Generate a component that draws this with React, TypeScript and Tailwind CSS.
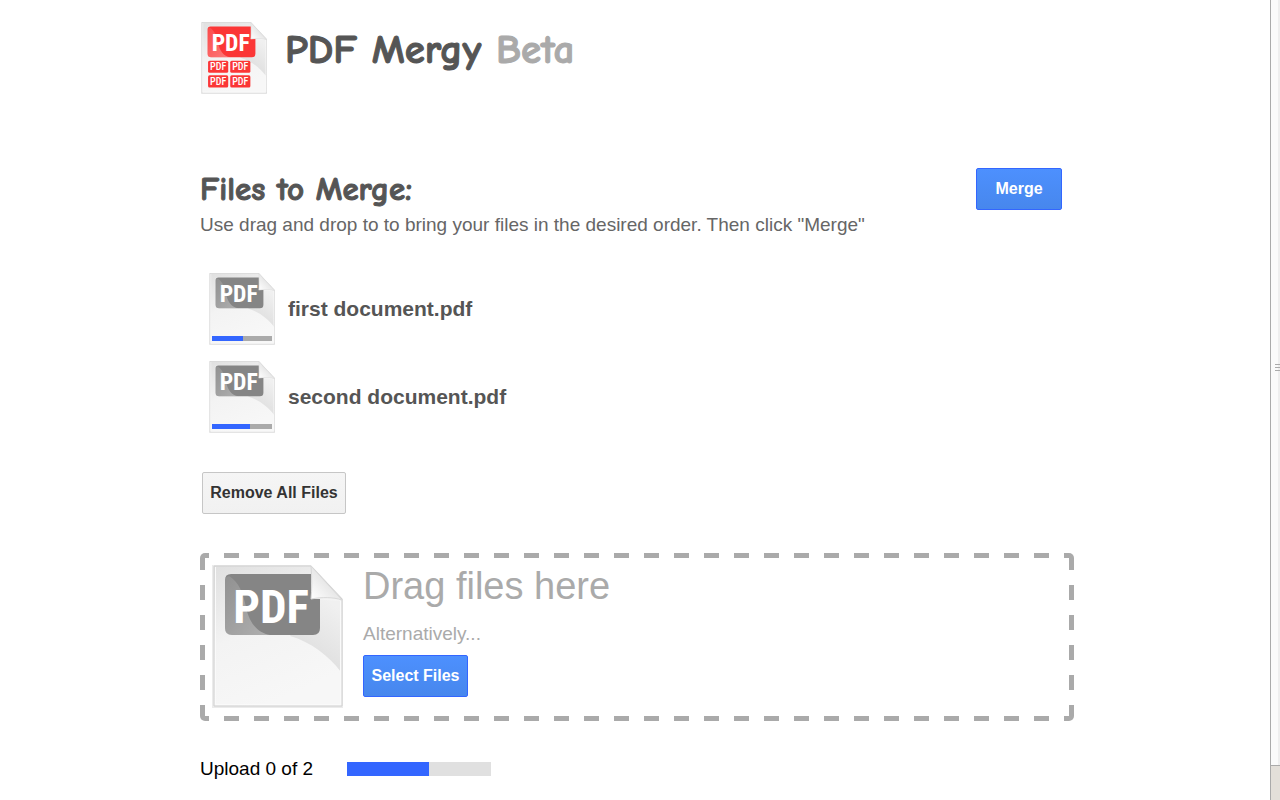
import { useId } from "react";

const files = [
  { name: "first document.pdf", progress: 52 },
  { name: "second document.pdf", progress: 64 },
];

const small = [
  { x: 14, y: 77 },
  { x: 58, y: 77 },
  { x: 14, y: 106 },
  { x: 58, y: 106 },
];

function PdfIcon({ red = false, className }: { red?: boolean; className: string }) {
  const id = useId();
  const tone = red ? "#fb3636" : "#858585";
  return (
    <svg viewBox="0 0 131 143" className={className} aria-hidden="true">
      <defs>
        <linearGradient id={`${id}p`} x1="0" y1="0" x2="0.4" y2="1">
          <stop offset="0" stopColor="#e0e0e0" />
          <stop offset="0.5" stopColor="#f3f3f3" />
          <stop offset="1" stopColor="#f7f7f7" />
        </linearGradient>
        <linearGradient id={`${id}s`} x1="0.2" y1="1" x2="0.7" y2="0">
          <stop offset="0" stopColor="#dadada" />
          <stop offset="1" stopColor="#f0f0f0" />
        </linearGradient>
        <linearGradient id={`${id}f`} x1="0" y1="1" x2="0.7" y2="0.3">
          <stop offset="0" stopColor="#ffffff" />
          <stop offset="1" stopColor="#dedede" />
        </linearGradient>
        <linearGradient id={`${id}b`} x1="0" y1="0" x2="1" y2="1">
          <stop offset="0" stopColor="#ffffff" stopOpacity="0.1" />
          <stop offset="1" stopColor="#ffffff" stopOpacity="0.35" />
        </linearGradient>
      </defs>
      <path d="M0 0H99L131 34V143H0Z" fill="#ebebeb" />
      <path d="M2 1H99L130 34V141H2Z" fill={`url(#${id}p)`} stroke="#d0d0d0" strokeWidth="1" />
      <path d="M78 71C99 77 117 91 129 107V36L99 34Z" fill={`url(#${id}s)`} />
      <path d="M3.5 2V139.5H128.5V36" fill="none" stroke="#fafafa" strokeWidth="1" />
      <path d="M19 9H99V34H108V63Q108 70 101 70H20Q13 70 13 63V15Q13 9 19 9Z" fill={tone} />
      <path d="M17 11C27 17 31 28 34 42C37 57 45 68 58 70H20Q13 70 13 63V15Q13 12 17 11Z" fill={`url(#${id}b)`} />
      <path d="M99 1C100 13 100 24 99 34C110 32 121 32 130 35Z" fill={`url(#${id}f)`} stroke="#d8d8d8" strokeWidth="1" />
      <text x="59" y="58" textAnchor="middle" fontFamily="'Roboto Condensed', 'Open Sans Condensed', Roboto, sans-serif" fontWeight="700" fontSize="47" fill="#fff">
        PDF
      </text>
      {red &&
        small.map((b) => (
          <g key={`${b.x}-${b.y}`}>
            <rect x={b.x} y={b.y} width="40" height="24" rx="3" fill={tone} />
            <text x={b.x + 20} y={b.y + 19} textAnchor="middle" fontFamily="'Roboto Condensed', 'Open Sans Condensed', Roboto, sans-serif" fontWeight="500" fontSize="20" fill="#fff">
              PDF
            </text>
          </g>
        ))}
    </svg>
  );
}

const blueButton =
  "h-[42px] shrink-0 rounded-[2px] border border-[#36f] bg-linear-to-b from-[#4d90fe] to-[#4787ed] text-base font-bold text-white";

const heading =
  "font-['Comic_Neue','Comic_Relief','Comic_Sans_MS',cursive] font-bold [-webkit-text-stroke:1px_currentColor]";

export default function App() {
  return (
    <div className="flex min-h-screen bg-white font-['Liberation_Sans',Arial,sans-serif] text-[#555]">
      <main className="min-w-0 flex-1">
        <div className="mx-auto max-w-[878px] pl-1">
          <header className="flex items-start gap-[18px] pt-[22px]">
            <PdfIcon red className="ml-px h-[72px] w-[66px]" />
            <h1 className={`${heading} text-[41px] leading-[56px]`}>
              PDF Mergy <span className="text-[#aaa]">Beta</span>
            </h1>
          </header>

          <section className="mt-[74px]">
            <div className="flex items-start justify-between pr-3">
              <h2 className={`${heading} text-[33px] leading-[42px]`}>Files to Merge:</h2>
              <button type="button" className={`${blueButton} w-[86px]`}>Merge</button>
            </div>
            <p className="text-[19px] leading-[30px] text-[#666]">
              Use drag and drop to to bring your files in the desired order. Then click "Merge"
            </p>
            <ul className="mt-[33px] flex flex-col gap-4 pl-[9px]">
              {files.map((f) => (
                <li key={f.name} className="flex items-center gap-[13px]">
                  <div className="relative">
                    <PdfIcon className="block h-[72px] w-[66px]" />
                    <div className="absolute bottom-1 left-[3px] h-[5px] w-[60px] bg-[#aaa]">
                      <div className="h-full bg-[#36f]" style={{ width: `${f.progress}%` }} />
                    </div>
                  </div>
                  <span className="text-[21px] leading-7 font-bold">{f.name}</span>
                </li>
              ))}
            </ul>
            <button
              type="button"
              className="mt-[39px] ml-[2px] block h-[42px] w-[144px] rounded-[2px] border border-[#c6c6c6] bg-linear-to-b from-[#f5f5f5] to-[#f1f1f1] text-base font-bold text-[#333]"
            >
              Remove All Files
            </button>
          </section>

          <section className="mt-[39px] flex h-[168px] items-start gap-5 rounded-[5px] bg-[repeating-linear-gradient(90deg,#aaa_0_9px,transparent_9px_24px,#aaa_24px_30px),repeating-linear-gradient(90deg,#aaa_0_9px,transparent_9px_24px,#aaa_24px_30px),repeating-linear-gradient(180deg,transparent_0_2px,#aaa_2px_17px,transparent_17px_30px),repeating-linear-gradient(180deg,transparent_0_2px,#aaa_2px_17px,transparent_17px_30px)] bg-[position:left_top,left_bottom,left_top,right_top] bg-[size:100%_5px,100%_5px,5px_100%,5px_100%] bg-no-repeat p-3">
            <PdfIcon className="h-[143px] w-[131px] shrink-0" />
            <div className="flex flex-col items-start text-[#aaa]">
              <p className="text-[38px] leading-[42px]">Drag files here</p>
              <p className="mt-[14px] text-[19px] leading-[26px]">Alternatively...</p>
              <button type="button" className={`${blueButton} mt-2 w-[105px]`}>Select Files</button>
            </div>
          </section>

          <div className="mt-9 flex items-center gap-[34px] text-[19px] leading-6 text-black">
            <span>Upload 0 of 2</span>
            <div className="h-[14px] w-[144px] bg-[#e0e0e0]">
              <div className="h-full w-[57%] bg-[#36f]" />
            </div>
          </div>
        </div>
      </main>

      <aside className="flex w-[10px] shrink-0 flex-col border-l border-[#aaa] bg-[linear-gradient(90deg,#fafafa_0_7px,#eee_7px)]">
        <div className="flex flex-1 flex-col items-end pt-[364px]">
          <div className="flex w-[5px] flex-col gap-[2px]">
            <div className="h-px bg-[#aaa]" />
            <div className="h-px bg-[#aaa]" />
            <div className="h-px bg-[#aaa]" />
          </div>
        </div>
        <div className="h-[35px] border-t border-[#aaa] bg-[#e3dfd9]" />
      </aside>
    </div>
  );
}
